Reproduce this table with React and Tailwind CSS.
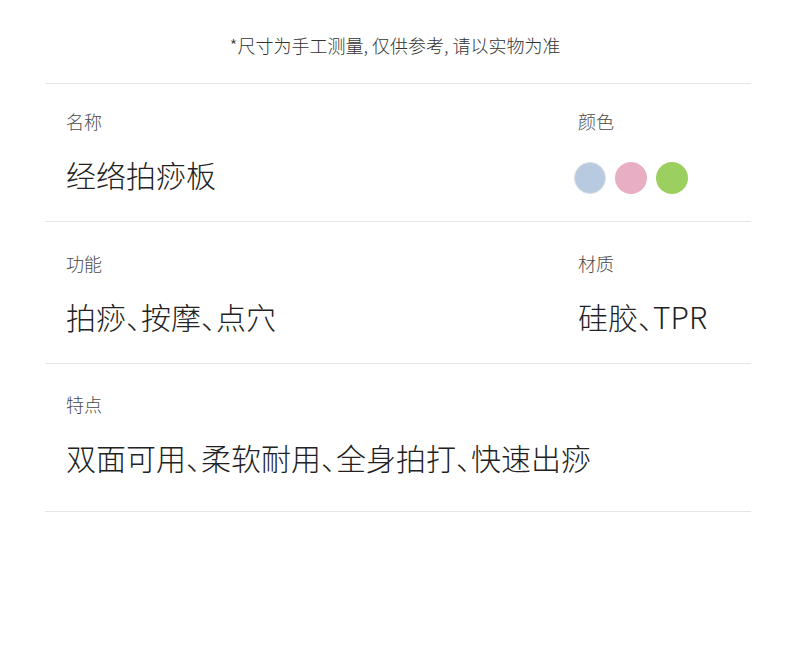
export default function App() {
  const font = { fontFamily: '"Noto Sans CJK SC", "Noto Sans", sans-serif' };
  const label = "text-[18px] leading-[26px] text-[#4a4a4a] font-light";
  const value = "mt-[20px] text-[30px] leading-[40px] text-[#222] font-extralight [font-feature-settings:'halt']";
  return (
    <div className="w-[790px] h-[655px] bg-white" style={font}>
      <div className="pt-[32px] text-center text-[18px] leading-[26px] text-[#333] font-light">
        *尺寸为手工测量, 仅供参考, 请以实物为准
      </div>
      <div className="ml-[45px] w-[706px] mt-[25px] border-t border-[#e5e5e5]">
        <div className="flex border-b border-[#e5e5e5] h-[138px]">
          <div className="w-[533px] pl-[21px] pt-[24px]">
            <div className={label}>名称</div>
            <div className={value}>经络拍痧板</div>
          </div>
          <div className="pt-[24px]">
            <div className={label}>颜色</div>
            <div className="mt-[28px] flex gap-[9px] -ml-[4px]">
              <div className="w-[32px] h-[32px] rounded-full bg-[#b8cae0] border border-[#d8dde4]"></div>
              <div className="w-[32px] h-[32px] rounded-full bg-[#e8aec4]"></div>
              <div className="w-[32px] h-[32px] rounded-full bg-[#9bcf5f]"></div>
            </div>
          </div>
        </div>
        <div className="flex border-b border-[#e5e5e5] h-[142px]">
          <div className="w-[533px] pl-[21px] pt-[28px]">
            <div className={label}>功能</div>
            <div className={value}>拍痧、按摩、点穴</div>
          </div>
          <div className="pt-[28px]">
            <div className={label}>材质</div>
            <div className={value}>硅胶、TPR</div>
          </div>
        </div>
        <div className="border-b border-[#e5e5e5] h-[148px] pl-[21px] pt-[27px]">
          <div className={label}>特点</div>
          <div className={value}>双面可用、柔软耐用、全身拍打、快速出痧</div>
        </div>
      </div>
    </div>
  );
}
